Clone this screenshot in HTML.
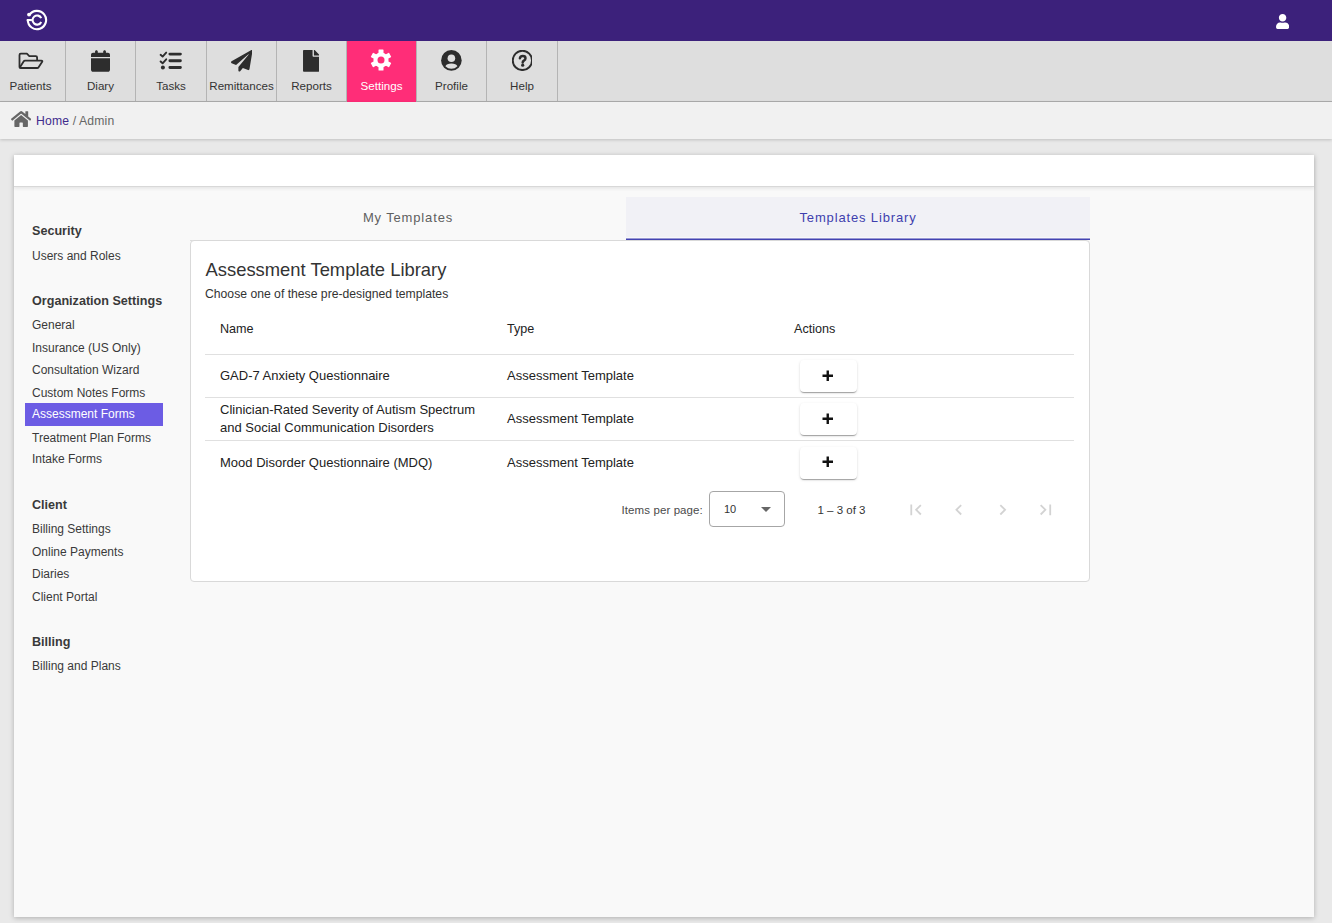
<!DOCTYPE html>
<html><head><meta charset="utf-8"><title>Admin</title>
<style>
html,body{margin:0;padding:0;}
body{width:1332px;height:923px;overflow:hidden;position:relative;background:#e9e9e9;font-family:"Liberation Sans", sans-serif;}
.t{position:absolute;white-space:pre;}
.b{position:absolute;}
</style></head><body>
<div class="b" style="left:0px;top:0px;width:1332px;height:41px;background:#3c217b;"></div>
<svg class="b" style="left:26px;top:9px;" width="22" height="22" viewBox="26 9 22 22" ><path d="M29.28 15.07 A9.15 9.15 0 1 1 27.8 20.05" fill="none" stroke="#fff" stroke-width="2.1"/><circle cx="29.0" cy="14.6" r="1.9" fill="#fff"/><rect x="26.75" y="19.0" width="5.2" height="2.1" fill="#fff"/><path d="M41.22 18.13 A4.55 4.55 0 1 0 41.22 21.97" fill="none" stroke="#fff" stroke-width="2.1"/></svg>
<svg class="b" style="left:1275.9px;top:14.1px;" width="13.2" height="14.9" viewBox="0 0 448 512" ><path fill="#fff" d="M224 256c70.7 0 128-57.3 128-128S294.7 0 224 0 96 57.3 96 128s57.3 128 128 128zm89.6 32h-16.7c-22.2 10.2-46.9 16-72.9 16s-50.6-5.8-72.9-16h-16.7C60.2 288 0 348.2 0 422.4V464c0 26.5 21.5 48 48 48h352c26.5 0 48-21.5 48-48v-41.6c0-74.2-60.2-134.4-134.4-134.4z"/></svg>
<div class="b" style="left:0px;top:41px;width:1332px;height:60px;background:#dedede;"></div>
<div class="b" style="left:0px;top:101px;width:1332px;height:1px;background:#adadad;"></div>
<div class="b" style="left:65px;top:41px;width:1px;height:60px;background:#b4b4b4;"></div>
<div class="t" style="left:-14.5px;width:90px;text-align:center;top:79px;font-size:11.6px;line-height:13.92px;color:#333;font-weight:normal;letter-spacing:0px;">Patients</div>
<div class="b" style="left:135px;top:41px;width:1px;height:60px;background:#b4b4b4;"></div>
<div class="t" style="left:55.5px;width:90px;text-align:center;top:79px;font-size:11.6px;line-height:13.92px;color:#333;font-weight:normal;letter-spacing:0px;">Diary</div>
<div class="b" style="left:206px;top:41px;width:1px;height:60px;background:#b4b4b4;"></div>
<div class="t" style="left:126.0px;width:90px;text-align:center;top:79px;font-size:11.6px;line-height:13.92px;color:#333;font-weight:normal;letter-spacing:0px;">Tasks</div>
<div class="b" style="left:276px;top:41px;width:1px;height:60px;background:#b4b4b4;"></div>
<div class="t" style="left:196.5px;width:90px;text-align:center;top:79px;font-size:11.6px;line-height:13.92px;color:#333;font-weight:normal;letter-spacing:0px;">Remittances</div>
<div class="b" style="left:346px;top:41px;width:1px;height:60px;background:#b4b4b4;"></div>
<div class="t" style="left:266.5px;width:90px;text-align:center;top:79px;font-size:11.6px;line-height:13.92px;color:#333;font-weight:normal;letter-spacing:0px;">Reports</div>
<div class="b" style="left:347px;top:41px;width:69px;height:61px;background:#ff2d78;"></div>
<div class="b" style="left:416px;top:41px;width:1px;height:60px;background:#b4b4b4;"></div>
<div class="t" style="left:336.5px;width:90px;text-align:center;top:79px;font-size:11.6px;line-height:13.92px;color:#fff;font-weight:normal;letter-spacing:0px;">Settings</div>
<div class="b" style="left:486px;top:41px;width:1px;height:60px;background:#b4b4b4;"></div>
<div class="t" style="left:406.5px;width:90px;text-align:center;top:79px;font-size:11.6px;line-height:13.92px;color:#333;font-weight:normal;letter-spacing:0px;">Profile</div>
<div class="b" style="left:557px;top:41px;width:1px;height:60px;background:#b4b4b4;"></div>
<div class="t" style="left:477.0px;width:90px;text-align:center;top:79px;font-size:11.6px;line-height:13.92px;color:#333;font-weight:normal;letter-spacing:0px;">Help</div>
<svg class="b" style="left:18px;top:52px;" width="26" height="18" viewBox="0 0 26 18" ><path d="M1.5 15.6 V3.0 Q1.5 1.7 2.8 1.7 H8.9 L11.3 4.1 H17.8 Q19.1 4.1 19.1 5.4 V8.4" fill="none" stroke="#2d2d2d" stroke-width="1.8" stroke-linejoin="round"/><path d="M1.8 15.6 L5.6 9.5 Q6.1 8.7 7.0 8.7 H23.4 Q24.8 8.7 24.2 9.8 L20.6 15.2 Q20.1 16.0 19.2 16.0 H2.8 Q1.6 16.0 1.8 15.6 Z" fill="none" stroke="#2d2d2d" stroke-width="1.8" stroke-linejoin="round"/></svg>
<svg class="b" style="left:91px;top:50px;" width="19" height="22" viewBox="0 0 448 512" ><path fill="#2d2d2d" d="M96 32V64H48C21.5 64 0 85.5 0 112v48H448V112c0-26.5-21.5-48-48-48H352V32c0-17.7-14.3-32-32-32s-32 14.3-32 32V64H160V32c0-17.7-14.3-32-32-32S96 14.3 96 32zM448 192H0V464c0 26.5 21.5 48 48 48H400c26.5 0 48-21.5 48-48V192z"/></svg>
<svg class="b" style="left:159px;top:51px;" width="24" height="20" viewBox="0 0 24 20" ><path d="M1.6 3.8 L3.6 5.6 L7.2 1.6" fill="none" stroke="#2d2d2d" stroke-width="1.9" stroke-linecap="round" stroke-linejoin="round"/><path d="M1.6 10.5 L3.6 12.3 L7.2 8.3" fill="none" stroke="#2d2d2d" stroke-width="1.9" stroke-linecap="round" stroke-linejoin="round"/><circle cx="3.9" cy="16.5" r="2" fill="#2d2d2d"/><path d="M10.9 3.1 H21.4 M10.9 9.8 H21.4 M10.9 16.5 H21.4" stroke="#2d2d2d" stroke-width="2.9" stroke-linecap="round"/></svg>
<svg class="b" style="left:230.6px;top:50.2px;" width="21.5" height="21.5" viewBox="0 0 512 512" ><path fill="#2d2d2d" d="M476 3.2L12.5 270.6c-18.1 10.4-15.8 35.6 2.2 43.2L121 358.4l287.3-253.2c5.5-4.9 13.3 2.6 8.6 8.3L176 407v80.5c0 23.6 28.5 32.9 42.5 15.8L282 426l124.6 52.2c14.2 6 30.4-2.9 33-18.2l72-432C515 7.8 493.3-6.8 476 3.2z"/></svg>
<svg class="b" style="left:303px;top:50px;" width="16.4" height="21.8" viewBox="0 0 384 512" ><path fill="#2d2d2d" d="M224 136V0H24C10.7 0 0 10.7 0 24v464c0 13.3 10.7 24 24 24h336c13.3 0 24-10.7 24-24V160H248c-13.2 0-24-10.8-24-24zm160-14.1v6.1H256V0h6.1c6.4 0 12.5 2.5 17 7l97.9 98c4.5 4.5 7 10.6 7 16.9z"/></svg>
<svg class="b" style="left:370.1px;top:49.4px;" width="22" height="22" viewBox="-11 -11 22 22" ><circle r="7.6" fill="#fff"/><rect x="-2.5" y="-10.5" width="5" height="6" rx="0.6" transform="rotate(0)" fill="#fff"/><rect x="-2.5" y="-10.5" width="5" height="6" rx="0.6" transform="rotate(60)" fill="#fff"/><rect x="-2.5" y="-10.5" width="5" height="6" rx="0.6" transform="rotate(120)" fill="#fff"/><rect x="-2.5" y="-10.5" width="5" height="6" rx="0.6" transform="rotate(180)" fill="#fff"/><rect x="-2.5" y="-10.5" width="5" height="6" rx="0.6" transform="rotate(240)" fill="#fff"/><rect x="-2.5" y="-10.5" width="5" height="6" rx="0.6" transform="rotate(300)" fill="#fff"/><circle r="3.5" fill="#ff2d78"/></svg>
<svg class="b" style="left:441.3px;top:50.2px;" width="20.8" height="20.8" viewBox="0 0 20.8 20.8" ><circle cx="10.4" cy="10.4" r="10.3" fill="#2d2d2d"/><circle cx="10.4" cy="8.25" r="3.8" fill="#dedede"/><path d="M4.4 16.2 Q5.6 13.6 10.4 13.6 Q15.2 13.6 16.4 16.2 Q13.9 18.7 10.4 18.7 Q6.9 18.7 4.4 16.2 Z" fill="#dedede"/></svg>
<svg class="b" style="left:511.6px;top:50.2px;" width="20.8" height="20.8" viewBox="0 0 20.8 20.8" ><circle cx="10.4" cy="10.4" r="9.65" fill="none" stroke="#2d2d2d" stroke-width="1.95"/><path d="M7.9 8.2 Q8.4 6.1 10.8 6.1 Q13.5 6.1 13.5 8.3 Q13.5 9.8 11.9 10.6 Q10.7 11.3 10.7 12.5" fill="none" stroke="#2d2d2d" stroke-width="2.5" stroke-linecap="round"/><circle cx="10.7" cy="15.2" r="1.6" fill="#2d2d2d"/></svg>
<div class="b" style="left:0px;top:102px;width:1332px;height:37px;background:#f1f1f1;box-shadow:0 1px 3px rgba(0,0,0,0.18);"></div>
<svg class="b" style="left:10.7px;top:109.9px;" width="20.3" height="18.04" viewBox="0 0 576 512" ><path fill="#666" d="M280.37 148.26L96 300.11V464a16 16 0 0 0 16 16l112.06-.29a16 16 0 0 0 15.94-16V368a16 16 0 0 1 16-16h64a16 16 0 0 1 16 16v95.64a16 16 0 0 0 16 16.05L464 480a16 16 0 0 0 16-16V300L295.67 148.26a12.19 12.19 0 0 0-15.3 0zM571.6 251.47L488 182.56V44.05a12 12 0 0 0-12-12h-56a12 12 0 0 0-12 12v72.61L318.47 43a48 48 0 0 0-61 0L4.34 251.47a12 12 0 0 0-1.6 16.9l25.5 31A12 12 0 0 0 45.15 301l235.22-193.74a12.19 12.19 0 0 1 15.3 0L530.9 301a12 12 0 0 0 16.9-1.6l25.5-31a12 12 0 0 0-1.7-16.93z"/></svg>
<div class="t" style="left:36px;top:114px;font-size:12.2px;line-height:14.64px;color:#666;font-weight:normal;letter-spacing:0.15px;"><span style="color:#3f2a8c">Home</span> / Admin</div>
<div class="b" style="left:14px;top:155px;width:1300px;height:762px;background:#f9f9f9;box-shadow:0 1px 5px rgba(0,0,0,0.25);"></div>
<div class="b" style="left:14px;top:155px;width:1300px;height:31px;background:#fff;border-bottom:1px solid #d8d8d8;box-shadow:0 2px 3px rgba(0,0,0,0.07);"></div>
<div class="b" style="left:25px;top:403px;width:138px;height:23px;background:#6c5ce4;"></div>
<div class="t" style="left:32px;top:224px;font-size:12.6px;line-height:15.12px;color:#3a3a3a;font-weight:bold;letter-spacing:0px;">Security</div>
<div class="t" style="left:32px;top:249px;font-size:12px;line-height:14.4px;color:#3a3a3a;font-weight:normal;letter-spacing:0px;">Users and Roles</div>
<div class="t" style="left:32px;top:294px;font-size:12.6px;line-height:15.12px;color:#3a3a3a;font-weight:bold;letter-spacing:0px;">Organization Settings</div>
<div class="t" style="left:32px;top:318px;font-size:12px;line-height:14.4px;color:#3a3a3a;font-weight:normal;letter-spacing:0px;">General</div>
<div class="t" style="left:32px;top:341px;font-size:12px;line-height:14.4px;color:#3a3a3a;font-weight:normal;letter-spacing:0px;">Insurance (US Only)</div>
<div class="t" style="left:32px;top:363px;font-size:12px;line-height:14.4px;color:#3a3a3a;font-weight:normal;letter-spacing:0px;">Consultation Wizard</div>
<div class="t" style="left:32px;top:386px;font-size:12px;line-height:14.4px;color:#3a3a3a;font-weight:normal;letter-spacing:0px;">Custom Notes Forms</div>
<div class="t" style="left:32px;top:407px;font-size:12px;line-height:14.4px;color:#fff;font-weight:normal;letter-spacing:0px;">Assessment Forms</div>
<div class="t" style="left:32px;top:431px;font-size:12px;line-height:14.4px;color:#3a3a3a;font-weight:normal;letter-spacing:0px;">Treatment Plan Forms</div>
<div class="t" style="left:32px;top:452px;font-size:12px;line-height:14.4px;color:#3a3a3a;font-weight:normal;letter-spacing:0px;">Intake Forms</div>
<div class="t" style="left:32px;top:498px;font-size:12.6px;line-height:15.12px;color:#3a3a3a;font-weight:bold;letter-spacing:0px;">Client</div>
<div class="t" style="left:32px;top:522px;font-size:12px;line-height:14.4px;color:#3a3a3a;font-weight:normal;letter-spacing:0px;">Billing Settings</div>
<div class="t" style="left:32px;top:545px;font-size:12px;line-height:14.4px;color:#3a3a3a;font-weight:normal;letter-spacing:0px;">Online Payments</div>
<div class="t" style="left:32px;top:567px;font-size:12px;line-height:14.4px;color:#3a3a3a;font-weight:normal;letter-spacing:0px;">Diaries</div>
<div class="t" style="left:32px;top:590px;font-size:12px;line-height:14.4px;color:#3a3a3a;font-weight:normal;letter-spacing:0px;">Client Portal</div>
<div class="t" style="left:32px;top:635px;font-size:12.6px;line-height:15.12px;color:#3a3a3a;font-weight:bold;letter-spacing:0px;">Billing</div>
<div class="t" style="left:32px;top:659px;font-size:12px;line-height:14.4px;color:#3a3a3a;font-weight:normal;letter-spacing:0px;">Billing and Plans</div>
<div class="b" style="left:190px;top:240px;width:436px;height:1px;background:#dddddd;"></div>
<div class="b" style="left:626px;top:197px;width:464px;height:40px;background:#f1f1f6;"></div>
<div class="b" style="left:626px;top:237px;width:464px;height:1px;background:#f8f8fb;"></div>
<div class="b" style="left:626px;top:238px;width:464px;height:1px;background:#9a9ad4;"></div>
<div class="b" style="left:626px;top:239px;width:464px;height:1px;background:#4343b2;"></div>
<div class="t" style="left:258.0px;width:300px;text-align:center;top:210px;font-size:13px;line-height:15.6px;color:#5f5f5f;font-weight:normal;letter-spacing:0.85px;">My Templates</div>
<div class="t" style="left:708.0px;width:300px;text-align:center;top:210px;font-size:13px;line-height:15.6px;color:#3f3fae;font-weight:normal;letter-spacing:0.85px;">Templates Library</div>
<div class="b" style="left:190px;top:240px;width:900px;height:342px;background:#fff;border:1px solid #d9d9d9;border-radius:4px;box-sizing:border-box;"></div>
<div class="t" style="left:205.5px;top:259px;font-size:18.4px;line-height:22.08px;color:#333;font-weight:normal;letter-spacing:0px;">Assessment Template Library</div>
<div class="t" style="left:205px;top:287px;font-size:12.2px;line-height:14.64px;color:#333;font-weight:normal;letter-spacing:0px;">Choose one of these pre-designed templates</div>
<div class="t" style="left:220px;top:322px;font-size:12.6px;line-height:15.12px;color:#222;font-weight:normal;letter-spacing:0px;">Name</div>
<div class="t" style="left:507px;top:322px;font-size:12.6px;line-height:15.12px;color:#222;font-weight:normal;letter-spacing:0px;">Type</div>
<div class="t" style="left:794px;top:322px;font-size:12.6px;line-height:15.12px;color:#222;font-weight:normal;letter-spacing:0px;">Actions</div>
<div class="b" style="left:205px;top:354px;width:869px;height:1px;background:#e0e0e0;"></div>
<div class="b" style="left:205px;top:397px;width:869px;height:1px;background:#e0e0e0;"></div>
<div class="b" style="left:205px;top:440px;width:869px;height:1px;background:#e0e0e0;"></div>
<div class="t" style="left:220px;top:368px;font-size:13px;line-height:15.6px;color:#222;font-weight:normal;letter-spacing:0px;">GAD-7 Anxiety Questionnaire</div>
<div class="t" style="left:507px;top:368px;font-size:13px;line-height:15.6px;color:#222;font-weight:normal;letter-spacing:0px;">Assessment Template</div>
<div class="b" style="left:800px;top:360px;width:57px;height:32px;background:#fff;border-radius:4px;box-shadow:0 2px 1px -1px rgba(0,0,0,.2),0 1px 1px 0 rgba(0,0,0,.14),0 1px 3px 0 rgba(0,0,0,.12);"></div>
<svg class="b" style="left:822px;top:370px;" width="11.5" height="11.5" viewBox="0 0 11.5 11.5" ><path d="M5.75 0.5 V11 M0.5 5.75 H11" stroke="#111" stroke-width="2.4"/></svg>
<div class="t" style="left:220px;top:402px;font-size:13px;line-height:15.6px;color:#222;font-weight:normal;letter-spacing:0px;">Clinician-Rated Severity of Autism Spectrum</div>
<div class="t" style="left:220px;top:420px;font-size:13px;line-height:15.6px;color:#222;font-weight:normal;letter-spacing:0px;">and Social Communication Disorders</div>
<div class="t" style="left:507px;top:411px;font-size:13px;line-height:15.6px;color:#222;font-weight:normal;letter-spacing:0px;">Assessment Template</div>
<div class="b" style="left:800px;top:403px;width:57px;height:32px;background:#fff;border-radius:4px;box-shadow:0 2px 1px -1px rgba(0,0,0,.2),0 1px 1px 0 rgba(0,0,0,.14),0 1px 3px 0 rgba(0,0,0,.12);"></div>
<svg class="b" style="left:822px;top:413px;" width="11.5" height="11.5" viewBox="0 0 11.5 11.5" ><path d="M5.75 0.5 V11 M0.5 5.75 H11" stroke="#111" stroke-width="2.4"/></svg>
<div class="t" style="left:220px;top:455px;font-size:13px;line-height:15.6px;color:#222;font-weight:normal;letter-spacing:0px;">Mood Disorder Questionnaire (MDQ)</div>
<div class="t" style="left:507px;top:455px;font-size:13px;line-height:15.6px;color:#222;font-weight:normal;letter-spacing:0px;">Assessment Template</div>
<div class="b" style="left:800px;top:446.5px;width:57px;height:32px;background:#fff;border-radius:4px;box-shadow:0 2px 1px -1px rgba(0,0,0,.2),0 1px 1px 0 rgba(0,0,0,.14),0 1px 3px 0 rgba(0,0,0,.12);"></div>
<svg class="b" style="left:822px;top:456px;" width="11.5" height="11.5" viewBox="0 0 11.5 11.5" ><path d="M5.75 0.5 V11 M0.5 5.75 H11" stroke="#111" stroke-width="2.4"/></svg>
<div class="t" style="left:621.5px;top:504px;font-size:11.5px;line-height:13.8px;color:#4a4a4a;font-weight:normal;letter-spacing:0.1px;">Items per page:</div>
<div class="b" style="left:709px;top:491px;width:76px;height:36px;border:1px solid #a6a6a6;border-radius:4px;box-sizing:border-box;"></div>
<div class="t" style="left:724px;top:503px;font-size:11px;line-height:13.2px;color:#333;font-weight:normal;letter-spacing:0px;">10</div>
<svg class="b" style="left:761px;top:507px;" width="10" height="5" viewBox="0 0 10 5" ><path d="M0 0 L5 5 L10 0 Z" fill="#666"/></svg>
<div class="t" style="left:817.5px;top:504px;font-size:11.5px;line-height:13.8px;color:#333;font-weight:normal;letter-spacing:0px;">1 – 3 of 3</div>
<svg class="b" style="left:904.75px;top:498.85px;" width="21.5" height="21.5" viewBox="0 0 24 24" ><path fill="#d3d3d3" d="M18.41 16.59L13.82 12l4.59-4.59L17 6l-6 6 6 6zM6 6h2v12H6z"/></svg>
<svg class="b" style="left:947.75px;top:498.85px;" width="21.5" height="21.5" viewBox="0 0 24 24" ><path fill="#d3d3d3" d="M15.41 7.41L14 6l-6 6 6 6 1.41-1.41L10.83 12z"/></svg>
<svg class="b" style="left:991.75px;top:498.85px;" width="21.5" height="21.5" viewBox="0 0 24 24" ><path fill="#d3d3d3" d="M10 6L8.59 7.41 13.17 12l-4.58 4.59L10 18l6-6z"/></svg>
<svg class="b" style="left:1034.75px;top:498.85px;" width="21.5" height="21.5" viewBox="0 0 24 24" ><path fill="#d3d3d3" d="M5.59 7.41L10.18 12l-4.59 4.59L7 18l6-6-6-6zM16 6h2v12h-2z"/></svg>
</body></html>
